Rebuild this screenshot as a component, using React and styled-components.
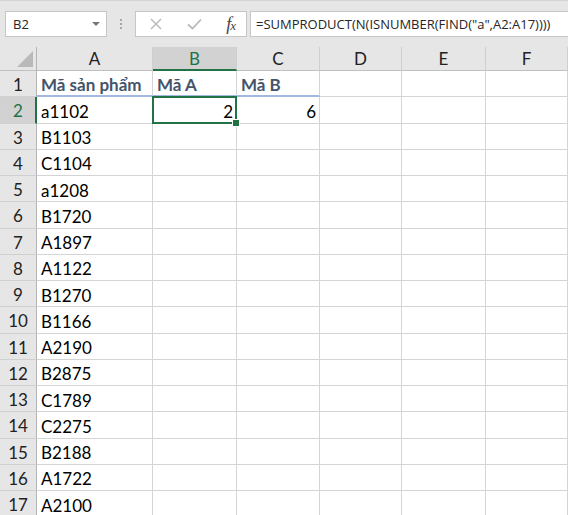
import React from 'react';
import styled, { createGlobalStyle, css } from 'styled-components';

const GlobalStyle = createGlobalStyle`
  html, body {
    margin: 0;
    padding: 0;
    background: #ffffff;
    overflow: hidden;
  }
`;

const columns = ['A', 'B', 'C', 'D', 'E', 'F'];
const colWidths = [116, 84, 83, 82, 84, 82];

const rows = [
  ['Mã sản phẩm', 'Mã A', 'Mã B'],
  ['a1102', 2, 6],
  ['B1103'],
  ['C1104'],
  ['a1208'],
  ['B1720'],
  ['A1897'],
  ['A1122'],
  ['B1270'],
  ['B1166'],
  ['A2190'],
  ['B2875'],
  ['C1789'],
  ['C2275'],
  ['B2188'],
  ['A1722'],
  ['A2100'],
];

const App = () => {
  return (
    <>
      <GlobalStyle />
      <Window>
        <FormulaBar>
          <NameBox>
            <span>B2</span>
            <DropCaret />
          </NameBox>
          <Grip>
            <i />
            <i />
            <i />
          </Grip>
          <ButtonBox>
            <svg width="12" height="12" viewBox="0 0 12 12">
              <path d="M1 1 L11 11 M11 1 L1 11" stroke="#b8b8b8" strokeWidth="1.4" fill="none" />
            </svg>
            <svg width="15" height="12" viewBox="0 0 15 12">
              <path d="M1 6.5 L5.5 10.5 L14 1.5" stroke="#b8b8b8" strokeWidth="1.7" fill="none" />
            </svg>
            <Fx>
              f<sub>x</sub>
            </Fx>
          </ButtonBox>
          <FormulaInput>=SUMPRODUCT(N(ISNUMBER(FIND("a",A2:A17))))</FormulaInput>
        </FormulaBar>

        <Sheet $cols={colWidths}>
          <Corner>
            <CornerTriangle />
          </Corner>
          {columns.map((c) => (
            <ColHeader key={c} $active={c === 'B'}>
              {c}
            </ColHeader>
          ))}

          {rows.map((row, r) => (
            <React.Fragment key={r}>
              <RowHeader $active={r === 1}>{r + 1}</RowHeader>
              {columns.map((c, ci) => {
                const value = row[ci];
                const heading = r === 0;
                return (
                  <Cell
                    key={c}
                    $heading={heading && ci < 3}
                    $number={typeof value === 'number'}
                    $selected={r === 1 && ci === 1}
                  >
                    {value}
                    {r === 1 && ci === 1 && <FillHandle />}
                  </Cell>
                );
              })}
            </React.Fragment>
          ))}
        </Sheet>
      </Window>
    </>
  );
};

const Window = styled.div`
  width: 568px;
  height: 515px;
  overflow: hidden;
  background: #ffffff;
  font-family: Lato, "Open Sans", sans-serif;
`;

const FormulaBar = styled.div`
  height: 47px;
  box-sizing: border-box;
  background: #e6e6e6;
  border-top: 1px solid #d4d4d4;
  display: flex;
  align-items: flex-start;
  padding: 10px 0 0 5px;
`;

const NameBox = styled.div`
  width: 102px;
  height: 26px;
  box-sizing: border-box;
  background: #ffffff;
  border: 1px solid #c6c6c6;
  display: flex;
  align-items: center;
  justify-content: space-between;
  padding: 0 6px 0 7px;
  font-family: "Open Sans", "Noto Sans", sans-serif;
  font-size: 13px;
  color: #262626;
`;

const DropCaret = styled.span`
  width: 0;
  height: 0;
  border-left: 4px solid transparent;
  border-right: 4px solid transparent;
  border-top: 4px solid #777777;
`;

const Grip = styled.div`
  width: 28px;
  height: 26px;
  display: flex;
  flex-direction: column;
  align-items: center;
  justify-content: center;
  gap: 2px;

  i {
    display: block;
    width: 2px;
    height: 2px;
    background: #a6a6a6;
  }
`;

const ButtonBox = styled.div`
  width: 112px;
  height: 26px;
  box-sizing: border-box;
  background: #ffffff;
  border: 1px solid #c6c6c6;
  display: flex;
  align-items: center;
  justify-content: space-between;
  padding: 0 11px 0 14px;
  margin-right: 3px;
`;

const Fx = styled.span`
  font-family: "Liberation Serif", serif;
  font-style: italic;
  font-size: 18px;
  color: #444444;
  line-height: 1;
  letter-spacing: -1px;

  sub {
    font-size: 13px;
    vertical-align: 0;
  }
`;

const FormulaInput = styled.div`
  flex: 1;
  height: 26px;
  box-sizing: border-box;
  background: #ffffff;
  border: 1px solid #c6c6c6;
  border-right: none;
  padding: 0 0 0 5px;
  display: flex;
  align-items: center;
  white-space: nowrap;
  overflow: hidden;
  font-family: "Open Sans", "Noto Sans", sans-serif;
  font-size: 13px;
  color: #262626;
`;

const Sheet = styled.div`
  display: grid;
  grid-template-columns: 37px ${(p) => p.$cols.map((w) => `${w}px`).join(' ')};
  grid-template-rows: 24px;
  grid-auto-rows: 26.25px;
`;

const headerBase = css`
  box-sizing: border-box;
  background: #e6e6e6;
  border-right: 1px solid #cfcfcf;
  border-bottom: 1px solid #c0c0c0;
  display: flex;
  align-items: center;
  justify-content: center;
  font-size: 17px;
  color: #222222;
`;

const Corner = styled.div`
  ${headerBase};
  border-right-color: #b5b5b5;
  position: relative;
`;

const CornerTriangle = styled.span`
  position: absolute;
  right: 3px;
  bottom: 3px;
  width: 0;
  height: 0;
  border-left: 16px solid transparent;
  border-bottom: 16px solid #b9b9b9;
`;

const ColHeader = styled.div`
  ${headerBase};
  ${(p) =>
    p.$active &&
    css`
      background: #d2d2d2;
      color: #217346;
      border-bottom: 2px solid #217346;
      padding-top: 1px;
    `}
`;

const RowHeader = styled.div`
  ${headerBase};
  border-right: 1px solid #b5b5b5;
  border-bottom: 1px solid #d0d0d0;
  padding-top: 2px;
  ${(p) =>
    p.$active &&
    css`
      background: #d2d2d2;
      color: #217346;
      border-right: 2px solid #217346;
      padding-left: 1px;
    `}
`;

const Cell = styled.div`
  position: relative;
  box-sizing: border-box;
  border-right: 1px solid #d4d4d4;
  border-bottom: 1px solid #d4d4d4;
  display: flex;
  align-items: center;
  justify-content: ${(p) => (p.$number ? 'flex-end' : 'flex-start')};
  padding: 3px 3px 0 4px;
  font-size: 17px;
  color: #000000;
  white-space: nowrap;

  ${(p) =>
    p.$heading &&
    css`
      font-weight: 700;
      color: #44546a;
      border-bottom: 2px solid #a2b8e1;
    `}

  ${(p) =>
    p.$selected &&
    css`
      &::after {
        content: '';
        position: absolute;
        top: -1px;
        left: -1px;
        right: -1px;
        bottom: -1px;
        border: 2px solid #217346;
        pointer-events: none;
      }
    `}
`;

const FillHandle = styled.span`
  position: absolute;
  right: -4px;
  bottom: -4px;
  width: 6px;
  height: 6px;
  background: #217346;
  border: 1px solid #ffffff;
  z-index: 2;
`;

export default App;
